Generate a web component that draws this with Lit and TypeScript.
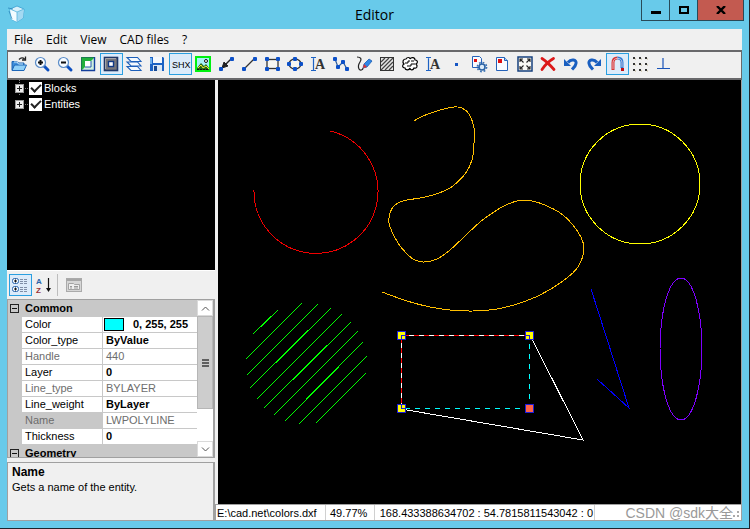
import { LitElement, html, svg, css, TemplateResult, SVGTemplateResult } from "lit";
import { customElement, property } from "lit/decorators.js";
import { classMap } from "lit/directives/class-map.js";

type Art = SVGTemplateResult;

const handles = (pts: number[][]): Art =>
  svg`${pts.map(([x, y]) => svg`<rect x=${x} y=${y} width="4" height="4" rx="1" fill="#0c50c8"/>`)}`;

const lens = (plus: boolean): Art => svg`
  <path d="M10 10l4 4" stroke="#0c4fc0" stroke-width="3" stroke-linecap="round"/>
  <circle cx="6.5" cy="6.5" r="5" fill="#f7fbff" stroke="#5a8cc8" stroke-width="1.2"/>
  <path d="M4 6.5h5" stroke="#111" stroke-width="2"/>
  ${plus ? svg`<path d="M6.500 4v5" stroke="#111" stroke-width="2"/>` : ""}`;

const textMark: Art = svg`
  <path d="M1 1.500h2l.5.500.5-.5h2M1 14.500h2l.5-.5.5.5h2M3.500 2v12" fill="none" stroke="#1d62c4" stroke-width="1.200"/>
  <text class="serif-a" x="5" y="13">A</text>`;

const sheet: Art = svg`
  <path d="M2.500 1.500h8l3 3v10h-11z" fill="#f8fbff" stroke="#2461b8"/>
  <path d="M10.500 1.500v3h3" fill="#a8cdf0" stroke="#2461b8"/>
  <rect x="4" y="3" width="4" height="4" fill="#e01010"/>`;

const art: Record<string, Art> = {
  open: svg`
    <path d="M1 14V5.500h5l1.500 1.500H13v7z" fill="#3f8fdc" stroke="#1f66b4"/>
    <path d="M1 14.500l2.500-5.500H15.500L13 14.500z" fill="#8fd0f8" stroke="#1d66b8"/>
    <path d="M3 6h3l1.500 2H12" fill="none" stroke="#c8e6fa"/>
    <path d="M8 3.500c2-2 4-2 5.500-.5M14.500.500v3.500H11" fill="none" stroke="#222" stroke-width="1.300"/>`,
  zoomIn: lens(true),
  zoomOut: lens(false),
  fit: svg`
    <path d="M1 1h14v14H1z" fill="#cfeee0"/><path d="M1 1h14L1 15z" fill="#22b03c"/>
    <path d="M1.500 15V1.500H15" fill="none" stroke="#1c7c50"/>
    <path d="M14.500 1v13.500H1" fill="none" stroke="#143f9c" stroke-width="1.400"/>
    <rect x="5" y="5" width="6" height="6" fill="#fff"/><path d="M11 5v6H5" fill="none" stroke="#2458a8"/>`,
  shade: svg`
    <rect x="1.500" y="1.500" width="13" height="13" fill="#77777b" stroke="#1f3768" stroke-width="1.600"/>
    <path d="M2.500 13V2.500H13" fill="none" stroke="#a4a4a8"/>
    <rect x="5.500" y="5.500" width="5" height="5" fill="#fff" stroke="#123a86" stroke-width="1.400"/>`,
  layers: svg`<g fill="#f4faff" stroke="#1c5fba" stroke-width="1.100">
    <path d="M1 10.500h10.500l3.500 4H5z"/><path d="M1 6h10.500l3.500 4H5z"/><path d="M1 1.500h10.500l3.500 4H5z"/></g>`,
  save: svg`
    <path d="M1 1h13l1 1v13H1z" fill="#1b62c4"/>
    <rect x="4" y="1" width="9" height="6" fill="#f4f8fc"/><rect x="1" y="2" width="2" height="6" fill="#70b0ee"/>
    <rect x="4" y="9" width="9" height="6" fill="#dbe8f4"/><rect x="5" y="10" width="3" height="5" fill="#184a94"/>`,
  shx: svg`<text class="shx" x="0" y="12">SHX</text>`,
  image: svg`
    <rect x="1" y="1" width="14" height="14" fill="#a8f2f8" stroke="#00f010" stroke-width="2"/>
    <path d="M2 12l4-5 3 3 2-2 3 4v2H2z" fill="#226a18"/><path d="M3 12l3-3 2 3 3-2 3 3" fill="none" stroke="#f2ee38"/>
    <circle cx="11" cy="5" r="1.500" fill="#fff" stroke="#111"/>
    <path d="M2 13.500h12" stroke="#111" stroke-dasharray="2 1"/>`,
  arrow: svg`<path d="M14 2L3 13" stroke="#222" stroke-width="1.400"/><path d="M4 12l2-6 4 4z" fill="#222" stroke="#222"/>
    ${handles([[12, 1], [1, 11]])}`,
  line: svg`<path d="M14 2L3 13" stroke="#333" stroke-width="1.200"/>${handles([[12, 1], [1, 11]])}`,
  rect: svg`<rect x="3" y="3.500" width="11" height="9" fill="#f6f6f2" stroke="#333" stroke-width="1.300"/>
    ${handles([[1, 1], [12, 1], [1, 11], [12, 11]])}`,
  ellipse: svg`<ellipse cx="8" cy="8" rx="6" ry="5" fill="#f6f6f2" stroke="#333" stroke-width="1.300"/>
    ${handles([[6, 1], [0, 6], [12, 6], [6, 11]])}`,
  text: textMark,
  polyline: svg`<path d="M2 3l3 8 5-5 4 7" fill="none" stroke="#2b5c9c" stroke-width="1.200"/>
    ${handles([[0, 1], [3, 9], [8, 4], [12, 11]])}`,
  pencil: svg`<path d="M1 1c4 0 5 2 3 5s-2 5-1 7 4 1 4-1" fill="none" stroke="#222" stroke-width="1.200"/>
    <path d="M7 12l1-4 5-5 3 2-5 6z" fill="#2e86e6" stroke="#1c5cb0" stroke-width=".8"/>
    <path d="M7 12l1-4 3 3z" fill="#e03030"/>`,
  hatch: svg`<rect x="1.500" y="1.500" width="13" height="13" fill="#e6e6e6" stroke="#333"/>
    <path d="M2 6l4-4M2 10l8-8M2 14L14 2M6 14l8-8M10 14l4-4" stroke="#444" stroke-width="1.200"/>`,
  cloud: svg`<path d="M4 3c1-2 4-2 4 0 1-2 5-2 5 1 3 0 3 3 1 4 2 2 1 5-2 4-1 3-4 2-4 0-1 3-5 2-5 0-3 0-3-3-1-4-2-2-1-5 2-5z" fill="#fff" stroke="#000" stroke-width="1.200"/>
    <path d="M3 7h3V5h2M5 10h4V8h4M9 5h3" fill="none" stroke="#000"/>`,
  mtext: textMark,
  point: svg`<rect x="7" y="7" width="3" height="3" fill="#1556c4"/>`,
  config: svg`<path d="M1.500.500h7l2 2v9h-9z" fill="#f8fbff" stroke="#2461b8"/><rect x="3" y="3" width="3" height="3" fill="#e01010"/>
    <circle cx="11" cy="11" r="3" fill="#dcecfa" stroke="#2b62a4" stroke-width="1.600"/>
    <circle cx="11" cy="11" r="4.600" fill="none" stroke="#3a72b4" stroke-width="1.600" stroke-dasharray="1.800 1.810"/>`,
  sheet,
  extents: svg`<rect x="1" y="1" width="14" height="14" fill="#f8f8f4" stroke="#143f7c" stroke-width="1.500"/>
    <path d="M3 6V3h3M10 3h3v3M13 10v3h-3M6 13H3v-3M3 3l3.500 3.500M13 3L9.500 6.500M13 13L9.500 9.500M3 13l3.500-3.500" fill="none" stroke="#222" stroke-width="1.100"/>`,
  remove: svg`<path d="M2 2.500C6 5 10 9 14 13.500M13.500 2.500C9 5 5 9 2 13.500" fill="none" stroke="#dc1818" stroke-width="2.800" stroke-linecap="round"/>`,
  undo: svg`<path d="M5 6.500c3-4 9-3 8 1-.5 3-2 4-4 6" fill="none" stroke="#1a5fc0" stroke-width="3"/><path d="M1 3v7h7z" fill="#1a5fc0"/>`,
  redo: svg`<path d="M11 6.500c-3-4-9-3-8 1 .5 3 2 4 4 6" fill="none" stroke="#1a5fc0" stroke-width="3"/><path d="M15 3v7H8z" fill="#1a5fc0"/>`,
  snap: svg`<path d="M4 14V6.500C4 3 6 2 8.500 2" fill="none" stroke="#d83434" stroke-width="3"/>
    <path d="M8.500 2C11 2 13 3 13 6.500V12" fill="none" stroke="#2f7fd8" stroke-width="3"/>
    <path d="M4 13V6.500C4 1 13 1 13 6.500V11" fill="none" stroke="#ecd0dc" stroke-width=".8"/>
    <rect x="12" y="12" width="3" height="3" fill="#c80c10"/>`,
  grid: svg`${[1, 7, 13].map((y) => [0, 6, 12].map((x) => svg`<rect x=${x + 1} y=${y} width="2" height="2" fill="#333"/><rect x=${x + 3} y=${y + 1} width="1" height="2" fill="#d8d2c0"/>`))}`,
  ortho: svg`<path d="M8 2v11M2 12.500h13" fill="none" stroke="#1a54b8" stroke-width="1.200"/>`,
  categories: svg`<g fill="#f4faff" stroke="#2a62a8"><rect x="0.500" y="1.500" width="6" height="5" rx="2"/><rect x="0.500" y="9.500" width="6" height="5" rx="2"/></g>
    <path d="M2 4h3M3.500 2.500v3M2 12h3M3.500 10.500v3" stroke="#111"/>
    <path d="M8 2.500h3M12 2.500h3M8 4.500h3M12 4.500h3M8 6.500h3M12 6.500h3M8 10.500h3M12 10.500h3M8 12.500h3M12 12.500h3M8 14.500h3M12 14.500h3" stroke="#7f8ea6"/>`,
  sort: svg`<text class="sort-a" x="0" y="7">A</text><text class="sort-z" x="0" y="16">Z</text>
    <path d="M12.500 1v12" stroke="#111" stroke-width="1.200"/><path d="M10 11h5l-2.500 4z" fill="#111"/>`,
  pages: svg`<rect x=".5" y="1.500" width="15" height="13" fill="#d6d6d6" stroke="#aaa"/><path d="M1 3h14" stroke="#a6a6a6" stroke-width="2"/>
    <path d="M2.500 12.500v-6h5l1 1h5v5z" fill="#eee" stroke="#a4a4a4"/><path d="M4 9.500h2M8 9.500h4M4 11h2M8 11h4" stroke="#999"/>`,
  cube: svg`<path d="M2 4l7-3 7 3-1 9-6 4-6-3z" fill="#d8f0fb" stroke="#3fa5d4" stroke-width=".9"/>
    <path d="M2 4l7 3 7-3-1 9-6 4z" fill="#a3d9f2"/><path d="M2 4l7 3v10l-6-3z" fill="#f2fbff"/>
    <path d="M2 4l7 3 7-3M9 7v10" fill="none" stroke="#58b4dc" stroke-width=".8"/>
    <path d="M0 3l5 1M1 6l3 8" stroke="#2a86bc" stroke-width=".8"/>`,
};

const icon = (name: string, size = 16): TemplateResult =>
  html`<svg width=${size} height=${size} viewBox="0 0 ${size} ${size}" fill="none" aria-hidden="true">${art[name]}</svg>`;

const tools: [string, string][] = [
  ["open", "Open"], ["zoomIn", "Zoom in"], ["zoomOut", "Zoom out"], ["fit", "Fit"], ["shade", "Background"],
  ["layers", "Layers"], ["save", "Save"], ["shx", "SHX"], ["image", "Image"], ["arrow", "Arrow"],
  ["line", "Line"], ["rect", "Rectangle"], ["ellipse", "Ellipse"], ["text", "Text"], ["polyline", "Polyline"],
  ["pencil", "Sketch"], ["hatch", "Hatch"], ["cloud", "Cloud"], ["mtext", "Multiline text"], ["point", "Point"],
  ["config", "Settings"], ["sheet", "Page"], ["extents", "Extents"], ["remove", "Delete"], ["undo", "Undo"],
  ["redo", "Redo"], ["snap", "Snap"], ["grid", "Grid"], ["ortho", "Ortho"],
];
const pressed = new Set(["shade", "shx", "snap", "categories"]);

const iconText = css`
  text { stroke: none; }
  .serif-a { font: bold 14px "Liberation Serif", serif; fill: #333; }
  .shx { font: 9px "Liberation Sans", sans-serif; fill: #000; }
  .sort-a { font: bold 8px "Liberation Sans", sans-serif; fill: #2c64a8; }
  .sort-z { font: bold 8px "Liberation Sans", sans-serif; fill: #983038; }
`;

const toolButton = css`
  .tool {
    flex: none;
    width: 23px;
    height: 22px;
    padding: 0 0 0 2px;
    display: flex;
    align-items: center;
    justify-content: flex-start;
    border: 1px solid transparent;
    background: none;
  }
  .tool svg { flex: none; overflow: visible; }
  .tool.on { border-color: #2a9fe0; background: #dcebfa; }
`;

const toolTemplate = ([name, label]: [string, string]) => html`
  <button class=${classMap({ tool: true, on: pressed.has(name) })} aria-label=${label}
    aria-pressed=${pressed.has(name) ? "true" : "false"}>${icon(name)}</button>`;

@customElement("cad-toolbar")
export class CadToolbar extends LitElement {
  static styles = [iconText, toolButton, css`
    :host {
      display: flex;
      height: 26px;
      padding-top: 1px;
      box-sizing: border-box;
      overflow: hidden;
      background: #f0f0f0;
    }
  `];
  render() {
    return tools.map(toolTemplate);
  }
}

/** Smooth cubic path through every given point. */
const smooth = (pts: number[][]): string => {
  let d = `M${pts[0]}`;
  for (let i = 0; i < pts.length - 1; i++) {
    const a = pts[i - 1] ?? pts[i];
    const b = pts[i];
    const c = pts[i + 1];
    const e = pts[i + 2] ?? c;
    d += `C${b[0] + (c[0] - a[0]) / 6},${b[1] + (c[1] - a[1]) / 6} ${c[0] - (e[0] - b[0]) / 6},${c[1] - (e[1] - b[1]) / 6} ${c}`;
  }
  return d;
};

@customElement("cad-drawing")
export class CadDrawing extends LitElement {
  static styles = css`
    :host { display: block; background: #000; overflow: hidden; min-height: 0; }
    svg { display: block; width: 100%; height: 100%; shape-rendering: crispEdges; fill: none; }
  `;

  private hatch = [
    [35, 254, 60, 230], [28, 279, 84, 223], [29, 295, 100, 224], [32, 308, 113, 228], [39, 319, 124, 234],
    [46, 328, 133, 242], [56, 335, 140, 251], [67, 341, 145, 262], [81, 344, 149, 276], [98, 343, 148, 293],
  ];

  private spline = [
    [196, 41], [205, 36], [222, 30], [236, 27], [244, 28], [251, 34], [256, 48], [256, 63], [254, 80], [247, 94],
    [232, 108], [215, 115], [202, 118], [185, 121], [175, 127], [171, 138], [172, 147], [180, 163], [190, 175],
    [197, 180], [205, 182], [213, 181], [221, 178], [232, 170], [247, 156], [262, 142], [273, 134], [284, 127],
    [299, 121], [314, 121], [329, 126], [345, 135], [360, 152], [366, 168], [360, 187], [345, 201], [322, 215],
    [299, 224], [279, 229], [255, 231], [232, 230], [212, 227], [189, 221], [164, 212],
  ];

  render() {
    return html`
      <svg role="img" aria-label="Drawing">
        <path d="M112 51A62 62 0 1 1 36 110" stroke="#f00000"/>
        <path d=${smooth(this.spline)} stroke="#ffbf00"/>
        <circle cx="422" cy="104" r="60" stroke="#ffff00"/>
        <ellipse cx="463" cy="269" rx="21" ry="71" stroke="#7f00ff"/>
        <path d="M373 209L411 328L379 299" stroke="#0000ff"/>
        ${this.hatch.map(([x1, y1, x2, y2]) => svg`<line x1=${x1} y1=${y1} x2=${x2} y2=${y2} stroke="#00ff00"/>`)}
        <path d="M312 255L365 360L183 329" stroke="#fff"/>
        <path d="M183.500 328V255.500H312" stroke="#ff0000"/>
        <path d="M183.500 328V255.500H312" stroke="#fff" stroke-dasharray="5 5"/>
        <path d="M187 328.500H307M311.500 264V324" stroke="#00ffff" stroke-dasharray="5 5"/>
        ${[[179, 251], [307, 251], [179, 324], [307, 324]].map(([x, y], i) => svg`
          <rect x=${x} y=${y} width="9" height="9" fill="#1c1cd8"/>
          <rect x=${x + 1} y=${y + 1} width="7" height="7" fill=${i === 3 ? "#ff6347" : "#ffff00"}/>`)}
        <path d="M183.500 259V255.500H187M308 255.500H311.500V259M183.500 325V328.500H187" stroke="#1c1cd8"/>
      </svg>`;
  }
}

interface Prop { name: string; value: string; kind?: "muted" | "selected" | "swatch"; }

@customElement("cad-properties")
export class CadProperties extends LitElement {
  @property({ attribute: false }) rows: Prop[] = [
    { name: "Color", value: "0, 255, 255", kind: "swatch" },
    { name: "Color_type", value: "ByValue" },
    { name: "Handle", value: "440", kind: "muted" },
    { name: "Layer", value: "0" },
    { name: "Line_type", value: "BYLAYER", kind: "muted" },
    { name: "Line_weight", value: "ByLayer" },
    { name: "Name", value: "LWPOLYLINE", kind: "selected" },
    { name: "Thickness", value: "0" },
  ];

  static styles = [iconText, toolButton, css`
    :host { display: block; font: 11px/15px "Liberation Sans", Arial, sans-serif; color: #000; }
    .bar { height: 29px; padding: 0 2px; display: flex; align-items: center; gap: 1px; box-sizing: border-box; border-top: 1px solid #fff; }
    .rule { width: 1px; height: 22px; background: #bdbdbd; margin: 0 4px 0 0; }
    .grid { display: flex; height: 159px; box-sizing: border-box; border: 1px solid #a0a0a0; border-right-width: 2px; overflow: hidden; background: #c8c8c8; }
    .list { flex: 1; min-width: 0; overflow: hidden; }
    table { width: 100%; table-layout: fixed; border-collapse: separate; border-spacing: 0; }
    .c-gutter { width: 14px; }
    .c-name { width: 81px; }
    th, td { height: 15px; padding: 0 3px; text-align: left; white-space: nowrap; overflow: hidden; }
    .group th { height: 17px; padding: 0; }
    .group div { display: flex; align-items: center; gap: 6px; padding-left: 2px; }
    .group button { width: 9px; height: 9px; padding: 0; border: 1px solid #222; background: #c8c8c8; display: flex; align-items: center; justify-content: center; }
    .group button::before { content: ""; width: 5px; height: 1px; background: #111; }
    .prop th, .prop td { background: #fff; border-bottom: 1px solid #c8c8c8; }
    .prop th { font-weight: normal; border-right: 1px solid #c8c8c8; }
    .prop .gutter { background: #c8c8c8; padding: 0; }
    .prop td { font-weight: bold; }
    .prop.muted th, .prop.muted td, .prop.selected th, .prop.selected td { color: #6d6d6d; font-weight: normal; }
    .prop.selected th { background: #c8c8c8; }
    .swatch td { padding-left: 1px; }
    .chip { display: inline-block; width: 18px; height: 11px; border: 1px solid #000; background: #00ffff; vertical-align: top; margin: 1px 9px 0 0; }
    .scroll { width: 16px; flex: none; display: flex; flex-direction: column; background: #fff; }
    .scroll button { height: 16px; flex: none; padding: 0; border: 1px solid #dadada; background: #fff; display: flex; align-items: center; justify-content: center; }
    .thumb { height: 93px; background: #cdcdcd; box-sizing: border-box; border: 1px solid #b6b6b6; display: flex; flex-direction: column; align-items: center; justify-content: center; gap: 1px; }
    .thumb i { width: 7px; height: 2px; background: #606060; }
    .track { flex: 1; }
    .help { height: 59px; margin-top: 4px; padding: 2px 4px; box-sizing: border-box; border: 1px solid #a0a0a0; border-right-width: 2px; }
    .help h2, .help p { margin: 0; }
    .help h2 { font-size: 12px; }
  `];

  private group(title: string) {
    return html`<tr class="group"><th colspan="3" scope="colgroup"><div><button aria-label="Collapse ${title}"></button>${title}</div></th></tr>`;
  }

  render() {
    return html`
      <div class="bar">
        ${toolTemplate(["categories", "Categorized"])}
        ${toolTemplate(["sort", "Alphabetical"])}
        <span class="rule"></span>
        ${toolTemplate(["pages", "Property pages"])}
      </div>
      <div class="grid">
        <div class="list">
          <table>
            <colgroup><col class="c-gutter" /><col class="c-name" /><col /></colgroup>
            <tbody>
              ${this.group("Common")}
              ${this.rows.map((r) => html`
                <tr class="prop ${r.kind ?? ""}">
                  <td class="gutter"></td>
                  <th scope="row">${r.name}</th>
                  <td>${r.kind === "swatch" ? html`<span class="chip"></span>` : ""}${r.value}</td>
                </tr>`)}
              ${this.group("Geometry")}
            </tbody>
          </table>
        </div>
        <div class="scroll">
          <button aria-label="Scroll up"><svg width="9" height="5" fill="none" stroke="#555"><path d="M1 4.500l3.500-3.500L8 4.500"/></svg></button>
          <div class="thumb"><i></i><i></i><i></i></div>
          <div class="track"></div>
          <button aria-label="Scroll down"><svg width="9" height="5" fill="none" stroke="#555"><path d="M1 .5l3.500 3.500L8 .5"/></svg></button>
        </div>
      </div>
      <section class="help"><h2>Name</h2><p>Gets a name of the entity.</p></section>`;
  }
}

@customElement("app-root")
export class AppRoot extends LitElement {
  static styles = css`
    :host {
      display: flex;
      flex-direction: column;
      height: 100vh;
      box-sizing: border-box;
      padding: 0 7px 7px;
      border-right: 1px solid #20242c;
      border-bottom: 1px solid #20242c;
      background: #68caea;
      font: 11px/16px "Liberation Sans", Arial, "Noto Sans CJK SC", sans-serif;
      color: #000;
    }
    .title { flex: none; height: 29px; display: grid; grid-template-columns: 1fr auto 1fr; align-items: start; }
    .logo { margin: 5px 0 0 1px; }
    h1 { margin: 0; font: 14px/30px "Open Sans", "Noto Sans", sans-serif; }
    .window { justify-self: end; display: flex; margin-right: -2px; }
    .window button { width: 28px; height: 21px; padding: 0; border: 1px solid #284a58; border-width: 0 0 1px 1px; background: none; display: flex; align-items: center; justify-content: center; }
    .window .close { width: 47px; background: #c35a50; border-right-width: 1px; }
    nav { flex: none; height: 21px; display: flex; gap: 13px; padding: 0 7px; background: #f0f0f0; }
    nav button { padding: 0; border: 0; background: none; font: 12px/22px "Open Sans", "Noto Sans", sans-serif; color: #000; }
    .frame { flex: none; border: 1px solid #69696b; border-width: 2px 1px 2px; }
    .main { flex: 1; min-height: 0; display: grid; grid-template-columns: 208px minmax(0, 1fr); background: #f0f0f0; }
    .side { display: flex; flex-direction: column; min-height: 0; }
    .tree { flex: 1; min-height: 0; margin: 0; padding: 0 0 0 8px; list-style: none; background: #000; color: #fff; overflow: hidden; }
    .tree li { display: flex; align-items: center; height: 16px; }
    .tree li:first-child { background: linear-gradient(#888 1px, #000 1px) 4px bottom / 1px 2px repeat-y; }
    .tree button { width: 9px; height: 9px; padding: 0; border: 1px solid #999; background: linear-gradient(#222, #222) center / 5px 1px no-repeat, linear-gradient(#222, #222) center / 1px 5px no-repeat, #eee; }
    .tree i { width: 3px; margin: 0 1px; border-top: 1px dotted #777; }
    .tree label { display: flex; align-items: center; gap: 2px; }
    .tree input { appearance: none; width: 13px; height: 13px; margin: 0; background: #fff; display: grid; place-items: center; }
    .tree input:checked::before { content: ""; width: 10px; height: 6px; border: 2px solid #222; border-width: 0 0 2px 2px; transform: translateY(-1px) rotate(-45deg); box-sizing: border-box; }
    .view { display: flex; flex-direction: column; min-height: 0; }
    cad-drawing { flex: 1; border-left: 3px solid #f0f0f0; border-right: 1px solid #a0a0a0; }
    .status { flex: none; height: 17px; box-sizing: border-box; display: flex; background: #fff; border: 1px solid #a0a0a0; white-space: nowrap; }
    .status span { box-sizing: border-box; border-right: 1px solid #d0d0d0; }
    .path { width: 110px; padding-left: 1px; }
    .zoom { width: 49px; padding-left: 4px; }
    .coords { width: 220px; padding-right: 1px; text-align: right; }
    .status .mark { flex: 1; border: 0; text-align: right; padding-right: 0; color: #999; font-size: 14px; }
    .grip { flex: none; align-self: end; }
  `;

  render() {
    return html`
      <header class="title">
        <svg class="logo" width="18" height="18" aria-hidden="true">${art.cube}</svg>
        <h1>Editor</h1>
        <div class="window">
          <button aria-label="Minimize"><svg width="10" height="10"><path d="M0 6h10v3H0z"/></svg></button>
          <button aria-label="Maximize"><svg width="10" height="8"><path d="M1 1h8v6H1z" fill="none" stroke="#000" stroke-width="2"/></svg></button>
          <button class="close" aria-label="Close"><svg width="10" height="8"><path d="M1 0l8 8M9 0L1 8" stroke="#000" stroke-width="2.400"/></svg></button>
        </div>
      </header>
      <nav>${["File", "Edit", "View", "CAD files", "?"].map((m) => html`<button>${m}</button>`)}</nav>
      <div class="frame"><cad-toolbar></cad-toolbar></div>
      <div class="main">
        <div class="side">
          <ul class="tree">
            ${["Blocks", "Entities"].map((n) => html`
              <li><button aria-label="Expand ${n}"></button><i></i><label><input type="checkbox" checked />${n}</label></li>`)}
          </ul>
          <cad-properties></cad-properties>
        </div>
        <div class="view">
          <cad-drawing></cad-drawing>
          <footer class="status">
            <span class="path">E:\\cad.net\\colors.dxf</span>
            <span class="zoom">49.77%</span>
            <span class="coords">168.433388634702 : 54.7815811543042 : 0</span>
            <span class="mark">CSDN @sdk大全</span>
            <svg class="grip" width="8" height="10" fill="#aaa"><path d="M4 1h2v2H4zM4 5h2v2H4zM0 5h2v2H0z"/></svg>
          </footer>
        </div>
      </div>`;
  }
}
